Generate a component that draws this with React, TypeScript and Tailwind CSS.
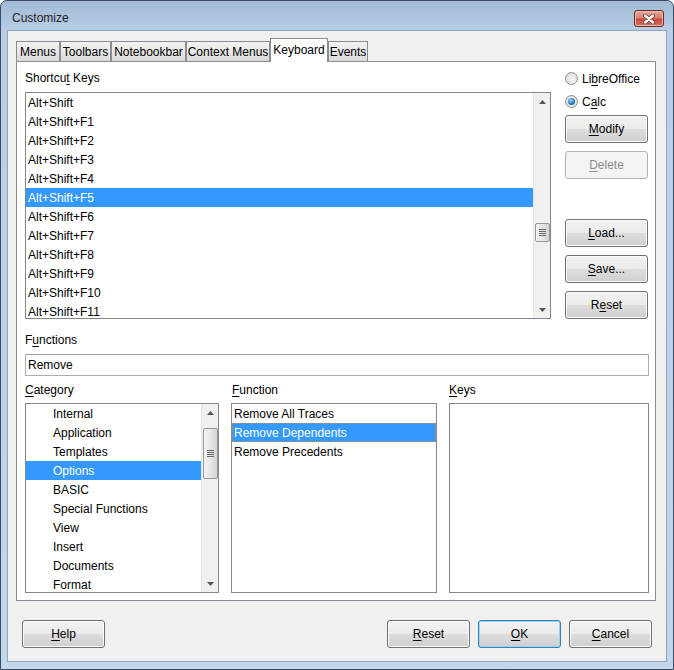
import React from "react";

const shortcuts = [
  "Alt+Shift",
  "Alt+Shift+F1",
  "Alt+Shift+F2",
  "Alt+Shift+F3",
  "Alt+Shift+F4",
  "Alt+Shift+F5",
  "Alt+Shift+F6",
  "Alt+Shift+F7",
  "Alt+Shift+F8",
  "Alt+Shift+F9",
  "Alt+Shift+F10",
  "Alt+Shift+F11",
];

const categories = [
  "Internal",
  "Application",
  "Templates",
  "Options",
  "BASIC",
  "Special Functions",
  "View",
  "Insert",
  "Documents",
  "Format",
];

const functions = ["Remove All Traces", "Remove Dependents", "Remove Precedents"];

// mnemonic underline
function U({ children }: { children: React.ReactNode }) {
  return <span className="underline decoration-1 underline-offset-[2px]">{children}</span>;
}

function Arrow({ down }: { down?: boolean }) {
  return (
    <svg width="7" height="4" viewBox="0 0 7 4">
      <path d={down ? "M0 0H7L3.5 4Z" : "M0 4H7L3.5 0Z"} fill="#555" />
    </svg>
  );
}

function ScrollBar({ thumb }: { thumb: string }) {
  return (
    <div className="flex w-[17px] shrink-0 flex-col border-l border-[#e4e4e4] bg-[#f0f0f0]">
      <div className="flex h-[17px] items-center justify-center">
        <Arrow />
      </div>
      <div className="flex-1">
        <div
          className={`${thumb} mx-auto flex w-[15px] flex-col items-center justify-center gap-[1px] rounded-[2px] border border-[#979797] bg-[linear-gradient(to_right,#f4f4f4,#e6e6e6_50%,#d4d4d4)]`}
        >
          <div className="h-px w-[7px] bg-[#666]" />
          <div className="h-px w-[7px] bg-[#666]" />
          <div className="h-px w-[7px] bg-[#666]" />
          <div className="h-px w-[7px] bg-[#666]" />
        </div>
      </div>
      <div className="flex h-[17px] items-center justify-center">
        <Arrow down />
      </div>
    </div>
  );
}

function Button({
  children,
  disabled,
  focused,
  className = "",
}: {
  children: React.ReactNode;
  disabled?: boolean;
  focused?: boolean;
  className?: string;
}) {
  const look = disabled
    ? "border-[#adb2b5] bg-[#f4f4f4] text-[#8d8d8d]"
    : focused
      ? "border-[#3c7fb1] shadow-[inset_0_0_0_1px_#8fd7f5] bg-[linear-gradient(to_bottom,#f2f2f2_0%,#ebebeb_50%,#dddddd_51%,#cfcfcf_100%)]"
      : "border-[#707070] shadow-[inset_0_0_0_1px_#fbfbfb] bg-[linear-gradient(to_bottom,#f2f2f2_0%,#ebebeb_50%,#dddddd_51%,#cfcfcf_100%)]";
  return (
    <div
      className={`${look} ${className} flex h-[28px] w-[83px] items-center justify-center rounded-[3px] border`}
    >
      {children}
    </div>
  );
}

function Radio({ checked, children }: { checked?: boolean; children: React.ReactNode }) {
  return (
    <div className="flex h-[23px] items-center gap-[4px]">
      <div className="flex h-[13px] w-[13px] items-center justify-center rounded-full border border-[#8e8f8f] bg-[radial-gradient(circle_at_60%_60%,#f4f4f4,#d8d8d8)]">
        {checked && (
          <div className="h-[7px] w-[7px] rounded-full bg-[radial-gradient(circle_at_40%_35%,#9fd8fb,#2a79c2_55%,#0d4f8c)]" />
        )}
      </div>
      <span>{children}</span>
    </div>
  );
}

function Tab({ w, active, children }: { w: string; active?: boolean; children: React.ReactNode }) {
  return active ? (
    <div
      className={`${w} relative z-10 -mb-px flex h-[24px] items-center justify-center border border-b-0 border-[#898c95] bg-white pb-[2px]`}
    >
      {children}
    </div>
  ) : (
    <div
      className={`${w} flex h-[20px] items-center justify-center border border-b-0 border-[#898c95] bg-[linear-gradient(to_bottom,#f3f3f3,#e7e7e7_50%,#d9d9d9)]`}
    >
      {children}
    </div>
  );
}

function CloseButton() {
  return (
    <div className="ml-auto flex h-[17px] w-[30px] items-center justify-center rounded-[3px] border border-[#6e2a22] bg-[linear-gradient(to_bottom,#e9ab9e_0%,#d9806f_45%,#c54b3a_55%,#d5745f_100%)] shadow-[inset_0_0_0_1px_#eebbb0]">
      <svg width="12" height="10" viewBox="0 0 12 10">
        <path d="M2 1.5L10 8.5M10 1.5L2 8.5" stroke="#6b3a33" strokeWidth="4" strokeLinecap="round" />
        <path d="M2 1.5L10 8.5M10 1.5L2 8.5" stroke="#ffffff" strokeWidth="2.4" strokeLinecap="round" />
      </svg>
    </div>
  );
}

export default function App() {
  return (
    <div className="h-[670px] w-[674px] font-['Liberation_Sans',Arial,sans-serif] text-[12px] text-black">
      <div className="flex h-full w-full flex-col rounded-t-[7px] border border-[#3b4c60] bg-[linear-gradient(to_bottom,#a2bad5_0px,#b8cee7_30px,#c2d6ec_100%)]">
        {/* title bar */}
        <div className="flex h-[29px] shrink-0 items-start pl-[11px] pr-[9px] pt-[9px]">
          <span className="leading-[17px] text-[#1e1e1e]">Customize</span>
          <CloseButton />
        </div>

        {/* client area */}
        <div className="mx-[6px] flex h-[632px] flex-col border border-[#8ea5bf] bg-[#f0f0f0]">
          <div className="mt-[7px] flex h-[23px] items-end pl-[8px]">
            <Tab w="w-[44px]">Menus</Tab>
            <Tab w="w-[51px]">Toolbars</Tab>
            <Tab w="w-[75px]">Notebookbar</Tab>
            <Tab w="w-[84px]">Context Menus</Tab>
            <Tab w="w-[58px]" active>
              Keyboard
            </Tab>
            <Tab w="w-[40px]">Events</Tab>
          </div>

          <div className="ml-[8px] flex h-[540px] w-[640px] flex-col border border-[#898c95] bg-white pl-[8px] pr-[6px]">
            <div className="flex h-[257px] gap-[14px]">
              <div className="flex w-[526px] flex-col">
                <div className="flex h-[30px] items-center pt-[2px]">
                  <span>
                    Shortcu<U>t</U> Keys
                  </span>
                </div>
                <div className="flex h-[227px] overflow-hidden border border-[#828790] bg-white">
                  <div className="flex-1 overflow-hidden">
                    {shortcuts.map((s, i) => (
                      <div
                        key={s}
                        className={`flex h-[19px] items-center whitespace-nowrap pl-[2px] ${
                          i === 5 ? "bg-[#3399ff] text-white" : ""
                        }`}
                      >
                        {s}
                      </div>
                    ))}
                  </div>
                  <ScrollBar thumb="mt-[113px] h-[19px]" />
                </div>
              </div>

              <div className="flex w-[83px] flex-col pt-[5px]">
                <Radio>
                  Li<U>b</U>reOffice
                </Radio>
                <Radio checked>
                  C<U>a</U>lc
                </Radio>
                <Button className="mt-[2px]">
                  <U>M</U>odify
                </Button>
                <Button disabled className="mt-[8px]">
                  <U>D</U>elete
                </Button>
                <Button className="mt-[40px]">
                  <U>L</U>oad...
                </Button>
                <Button className="mt-[8px]">
                  <U>S</U>ave...
                </Button>
                <Button className="mt-[8px]">
                  R<U>e</U>set
                </Button>
              </div>
            </div>

            <div className="mt-[13px] h-[16px] leading-[16px]">
              F<U>u</U>nctions
            </div>
            <div className="mt-[6px] flex h-[22px] w-[624px] items-center border border-[#abadb3] border-t-[#9a9ca3] bg-white pl-[2px]">
              Remove
            </div>

            <div className="mt-[6px] flex gap-[12px]">
              <div className="flex w-[194px] flex-col">
                <div className="mb-[5px] h-[16px] leading-[16px]">
                  <U>C</U>ategory
                </div>
                <div className="flex h-[190px] overflow-hidden border border-[#828790] bg-white">
                  <div className="flex-1 overflow-hidden">
                    {categories.map((c, i) => (
                      <div
                        key={c}
                        className={`flex h-[19px] items-center whitespace-nowrap pl-[27px] ${
                          i === 3 ? "bg-[#3399ff] text-white" : ""
                        }`}
                      >
                        {c}
                      </div>
                    ))}
                  </div>
                  <ScrollBar thumb="mt-[7px] h-[51px]" />
                </div>
              </div>

              <div className="flex w-[206px] flex-col">
                <div className="mb-[5px] h-[16px] pl-px leading-[16px]">
                  <U>F</U>unction
                </div>
                <div className="h-[190px] overflow-hidden border border-[#828790] bg-white">
                  {functions.map((f, i) => (
                    <div
                      key={f}
                      className={`flex h-[19px] items-center whitespace-nowrap ${
                        i === 1
                          ? "border border-dotted border-[#c98a4e] bg-[#3399ff] pl-[1px] text-white"
                          : "pl-[2px]"
                      }`}
                    >
                      {f}
                    </div>
                  ))}
                </div>
              </div>

              <div className="flex w-[200px] flex-col">
                <div className="mb-[5px] h-[16px] leading-[16px]">
                  <U>K</U>eys
                </div>
                <div className="h-[190px] border border-[#828790] bg-white" />
              </div>
            </div>
          </div>

          <div className="mt-[19px] flex pl-[14px] pr-[14px]">
            <Button>
              <U>H</U>elp
            </Button>
            <div className="ml-auto flex gap-[8px]">
              <Button>
                <U>R</U>eset
              </Button>
              <Button focused>
                <U>O</U>K
              </Button>
              <Button>
                <U>C</U>ancel
              </Button>
            </div>
          </div>
        </div>
      </div>
    </div>
  );
}
